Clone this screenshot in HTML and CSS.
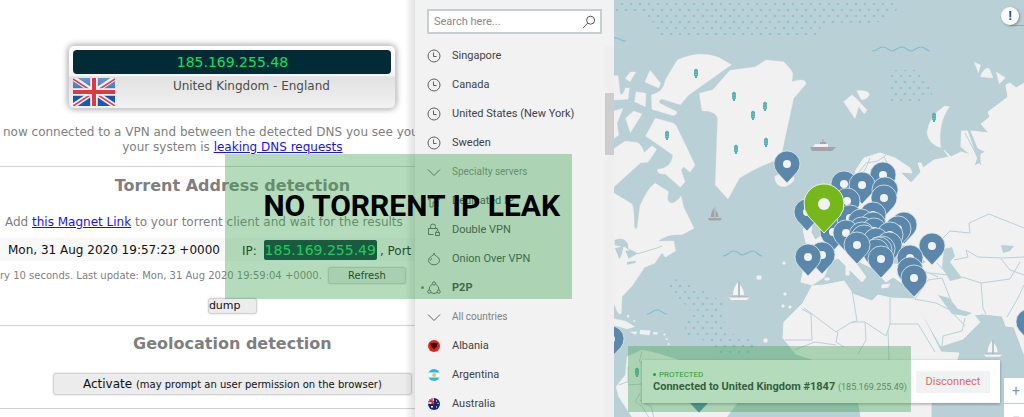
FILE: index.html
```html
<!DOCTYPE html>
<html lang="en">
<head>
    <meta charset="utf-8">
    <title>No torrent IP leak</title>
    <meta name="viewport" content="width=device-width, initial-scale=1">
    <link rel="stylesheet" href="styles.css">
</head>
<body>
<div class="page">

    <main class="report">
        <div class="reportInner">
            <div class="ipCard">
                <div class="ipBar">185.169.255.48</div>
                <div class="ipPlace">
                    <svg class="ukFlag" viewBox="0 0 42 28">
                        <defs>
                            <linearGradient id="flagBlue" x1="0" y1="0" x2="0" y2="1">
                                <stop offset="0" stop-color="#6f97cf"/>
                                <stop offset="0.5" stop-color="#3d6ebb"/>
                                <stop offset="0.51" stop-color="#1550a8"/>
                                <stop offset="1" stop-color="#1b59b4"/>
                            </linearGradient>
                        </defs>
                        <rect width="42" height="28" fill="url(#flagBlue)"/>
                        <path d="M0 0L42 28M42 0L0 28" stroke="#eef1f6" stroke-width="5"/>
                        <path d="M0 1L20 14M42 1L22 14M0 28L20 15M42 28L22 15" stroke="#e0444a" stroke-width="1.6"/>
                        <path d="M21 0V28M0 14H42" stroke="#f4f5f8" stroke-width="7.5"/>
                        <path d="M21 0V28M0 14H42" stroke="#dc3a3f" stroke-width="4"/>
                    </svg>
                    <span>United Kingdom - England</span>
                </div>
            </div>

            <p class="dnsNote">now connected to a VPN and between the detected DNS you see you</p>
            <p class="line">your system is <a href="#">leaking DNS requests</a></p>

            <section class="block torrent">
                <h2>Torrent Address detection</h2>
                <p class="magnet">Add <a href="#">this Magnet Link</a> to your torrent client and wait for the results</p>
                <div class="result">
                    <span>Mon, 31 Aug 2020 19:57:23 +0000</span>
                    <span class="resultPeer">IP: <span class="resultIp">185.169.255.49</span>, Port</span>
                </div>
                <div class="update">
                    <span>ry 10 seconds. Last update: Mon, 31 Aug 2020 19:59:04 +0000.</span>
                    <button class="refresh">Refresh</button>
                </div>
                <button class="dump">dump</button>
            </section>

            <section class="block geo">
                <h2>Geolocation detection</h2>
                <button class="activate">Activate <small>(may prompt an user permission on the browser)</small></button>
            </section>
            <hr>
        </div>
    </main>

    <aside class="servers">
        <label class="search">
            <input type="text" placeholder="Search here..." aria-label="Search">
            <svg class="searchIcon" viewBox="0 0 14 14"><circle cx="8.6" cy="5.2" r="4"/><path d="M5.6 8.2L1 13"/></svg>
        </label>
        <ul class="serverList">
            <li><a href="#"><svg class="icon"><use href="#clock"/></svg>Singapore</a></li>
            <li><a href="#"><svg class="icon"><use href="#clock"/></svg>Canada</a></li>
            <li><a href="#"><svg class="icon"><use href="#clock"/></svg>United States (New York)</a></li>
            <li><a href="#"><svg class="icon"><use href="#clock"/></svg>Sweden</a></li>
            <li><button class="group"><svg class="icon"><use href="#chevron"/></svg>Specialty servers</button></li>
            <li><a href="#"><svg class="icon" viewBox="0 0 14 14"><path d="M1 6L7 1L13 6M3 5V13H6V8H9V13H11V5"/></svg>Dedicated IP</a></li>
            <li><a href="#"><svg class="icon" viewBox="0 0 14 14"><path d="M6.500 11.500H1.500V5.500H10.500V7M3.500 5.500V3.500A2.500 2.500 0 0 1 8.500 3.500V5.500M8.500 9.500H12.500V12.500H8.500ZM9.500 9.500V8.500A1 1 0 0 1 11.500 8.500V9.500"/></svg>Double VPN</a></li>
            <li><a href="#"><svg class="icon" viewBox="0 0 14 14"><path d="M7 1Q7 3 9.500 4.300Q12.500 5.800 12.500 8.300C12.500 11 10 12.800 7 12.800S1.500 11 1.500 8.300Q1.500 5.800 4.500 4.300Q7 3 7 1ZM3.500 8.500Q3.700 7 5 6.300"/></svg>Onion Over VPN</a></li>
            <li class="active"><a href="#"><svg class="icon" viewBox="0 0 14 14"><circle cx="7" cy="2.500" r="1.600"/><circle cx="2.300" cy="10.700" r="1.600"/><circle cx="11.700" cy="10.700" r="1.600"/><path d="M5.300 3.200Q2 5 2 9M8.700 3.200Q12 5 12 9M3.900 11.600Q7 13.500 10.100 11.600"/></svg>P2P</a></li>
            <li><button class="group"><svg class="icon"><use href="#chevron"/></svg>All countries</button></li>
            <li><a href="#"><svg class="flag" viewBox="0 0 12 12"><circle cx="6" cy="6" r="6" fill="#e0261c"/><path d="M2.500 3L4.500 3.500L5 2.500L6 3.200L7 2.500L7.500 3.500L9.500 3L9 6.500L7.500 7.500L6 9.800L4.500 7.500L3 6.500Z" fill="#2d0a0a"/></svg>Albania</a></li>
            <li><a href="#"><svg class="flag" viewBox="0 0 12 12"><circle cx="6" cy="6" r="6" fill="#22b6f2"/><path d="M.6 3.500H11.400Q12.600 6 11.400 8.500H.6Q-.6 6 .6 3.500Z" fill="#fff"/><circle cx="6" cy="6" r="1.900" fill="#f3c537"/></svg>Argentina</a></li>
            <li><a href="#"><svg class="flag" viewBox="0 0 12 12"><circle cx="6" cy="6" r="6" fill="#1b2672"/><path d="M6 0V6H0A6 6 0 0 1 6 0Z" fill="#e9c3cb"/><path d="M4 .5V6M.5 3.500H6M1.500 1.500L6 6" stroke="#d5263b" stroke-width="1.200"/><path d="M3 8H5V9.500H3ZM8 2.500H9V3.500H8ZM9.500 5H10.500V6H9.500ZM8 8.500H9V9.500H8Z" fill="#fff"/></svg>Australia</a></li>
        </ul>
        <div class="scrollTrack"><div class="scrollThumb"></div></div>
    </aside>

    <section class="map">
        <svg class="world" viewBox="614 0 410 417" preserveAspectRatio="xMinYMin slice">
            <defs>
                <pattern id="dots" x="617" y="-2" width="9" height="12" patternUnits="userSpaceOnUse">
                    <circle cx="5" cy="6" r="1.300" fill="#8fc3ce"/>
                    <circle cx="0" cy="0" r="1.300" fill="#8fc3ce"/>
                    <circle cx="9" cy="0" r="1.300" fill="#8fc3ce"/>
                    <circle cx="0" cy="12" r="1.300" fill="#8fc3ce"/>
                    <circle cx="9" cy="12" r="1.300" fill="#8fc3ce"/>
                </pattern>
                <g id="pin">
                    <path d="M0 19L-9.800 8.500A13 13 0 1 1 9.800 8.500Z" fill="#5b88aa" stroke="#dfeaf0" stroke-width=".8"/>
                    <circle r="4" fill="#f1f3f4"/>
                </g>
                <g id="tree">
                    <path d="M0-4.500L2-3V2.500L1 3.500V5H-1V3.500L-2 2.500V-3Z" fill="#56b0b1"/>
                    <path d="M-2-1H2M-2 1.500H2" stroke="#a9d5d5" stroke-width=".4"/>
                </g>
                <g id="boat">
                    <path d="M-1-16V-3H-6Q-6-10-1-16ZM1-13Q5-9 5-3H1Z"/>
                    <path d="M-10-1H10L8 2H-8Z"/>
                    <path d="M0-17V-1M-9-1H9" stroke="#a5a2a5" stroke-width=".7"/>
                </g>
                <symbol id="clock" viewBox="0 0 14 14"><circle cx="7" cy="7" r="6"/><path d="M6.500 3.500V7.500H9.500"/></symbol>
                <symbol id="chevron" viewBox="0 0 14 14"><path d="M1 4.500L7 10.500L13 4.500"/></symbol>
            </defs>

            <path fill="url(#dots)" d="M614 0H898V9L880 22L855 24L820 28V35L800 38H760L700 36H655V24L640 12H614ZM888 70H916L932 84V96L914 103H888ZM670 280L682 279L705 292L723 302V320L735 336L756 337V357H715V342L685 338V326L690 308L670 293Z"/>

            <!-- arctic islands and greenland -->
            <g class="land" transform="translate(612 0) scale(.3333)">
                <path d="M196 180Q260 150 320 172L358 194L230 285L205 314L150 297Q138 300 143 310L195 335Q192 348 180 346L120 328L118 285L135 278Q155 270 160 240Z"/>
                <path d="M354 211L430 201L462 180L515 185Q540 210 542 220L540 245Q582 232 582 252L545 295L510 455Q505 478 480 485Q420 510 382 535L348 597L310 555L317 355Q312 338 290 334L270 332L262 280L302 270Z"/>
                <path d="M40 235L55 216L71 216L54 245ZM114 211L146 250L140 264L99 246ZM0 227H18L24 280Q32 292 40 264H52L48 298L0 300ZM72 275L102 280L100 320L68 305ZM0 335L33 325L15 370L20 405L0 420ZM65 333L90 342L55 398L41 355Z"/>
                <path d="M130 355L185 370Q193 376 197 386L249 495L234 517L215 500L207 510L219 545L205 562L160 522Q130 522 137 508Q178 505 183 465L101 408Z"/>
                <path d="M0 450L40 423L78 428Q92 440 96 458L120 437L134 448L108 487L86 488L0 566Z"/>
                <path d="M488 530Q515 510 546 530Q552 545 520 560Q490 562 488 530Z"/>
            </g>

            <!-- north america -->
            <g transform="translate(612 130) scale(.3333)">
                <path class="land" d="M0 185L60 222Q66 232 67 290Q72 304 76 290L84 228Q110 170 130 160L170 185Q160 215 180 220Q200 212 207 197L215 232L246 295L210 314Q165 310 138 334L185 333L191 362L160 382L150 368L128 400L98 412L60 468L30 500L28 550Q20 560 8 525H0Z"/>
                <path class="water" d="M8 330Q35 318 48 342L50 360L40 352L8 346ZM8 355L35 348L30 372L22 388L15 370ZM40 362L60 360L75 372L50 386ZM44 396L72 392L70 399L46 404Z"/>
                <path class="border thick" d="M50 358L78 371L138 353L150 348"/>
                <path class="land" d="M0 565L40 573L68 590L45 597L0 584ZM55 606L75 605L70 614ZM84 600L115 602L112 615L84 612ZM124 607H136V613H124ZM155 611H160V616H155ZM162 625H166V630H162ZM168 640H172V645H168ZM46 555H51V562H46ZM65 570H69V575H65Z"/>
                <path class="land" d="M45 680L90 660L130 668L200 690L260 740L375 820L345 861H60L20 800L12 770L40 735Z"/>
                <path class="border thick" d="M90 664L82 695L150 730M48 710V755L20 765M48 765L90 762M84 790L70 815L90 830L110 861M84 810L118 830L125 861"/>
            </g>

            <!-- eurasia -->
            <path class="land" d="M1030 80L1016 88L1010 83L1006 85L1008 97L988 112L990 117L981 124L989 133L971 131L978 148L986 152L981 154V163L974 166L977 157L971 155L961 152L951 157L944 150L949 157L934 160L923 168L921 163L918 163L921 172L911 183L900 172L912 173L910 168L895 158L880 153L864 158L856 170L850 195L836 226L815 240L822 258L805 263L801 282L812 285L824 277L830 262L838 258L852 272L862 282L866 277L852 258L872 268L886 282L893 277L905 285L914 288L915 300L917 305L941 346L963 339L980 322L974 315L983 314L1002 316L1006 326L1014 327L1018 338L1030 370Z"/>
            <path class="water" d="M944 249L952 247L955 256L950 262L962 278L950 281L942 267ZM891 250L904 245L926 262L915 267L892 263ZM1001 245L1014 246L1010 251L1003 253ZM938 295L949 298L958 309L972 313L966 316L952 314Z"/>
            <path class="border" d="M939 242L950 231L970 233L969 223L989 214L1024 228M954 260L968 257L966 250L978 257L1003 258L1024 257M962 277L981 283L983 308L986 314M981 283L1010 279L1020 262M1001 259L1010 270L1024 275M915 299L928 280L942 278L952 303M914 299L936 303L950 310L965 326M937 263L948 275L930 273M942 346L943 336L962 331L965 318M1007 317L1018 298L1024 285M905 285L922 270L938 277"/>
            <g class="land" transform="translate(816 0) scale(.3333)">
                <path d="M400 320Q365 370 374 443Q335 430 333 395Q340 350 385 318ZM83 305L108 284L125 300L153 330L145 342L128 320L117 356ZM122 272Q160 270 160 285Q150 302 135 298ZM475 187L494 195L487 218ZM493 230Q505 200 520 206L531 234ZM541 216L568 233L550 251ZM436 392H455L480 465L475 475L434 440Z"/>
            </g>
            <path class="border" d="M859 172L866 163L878 161L886 155M870 158L866 168L858 180M884 157L889 166L885 178M965 133L974 150L981 165"/>
            <path class="land" d="M803 229L812 226L811 232L818 246L806 243ZM846 264H849V275H846ZM882 285L890 284L888 287L882 288ZM825 278H829V280H825ZM783 262H785V264H783ZM784 293H786V295H784ZM782 305H784V307H782ZM789 306H791V308H789ZM764 339H767V342H764ZM757 276H761V279H757Z"/>

            <!-- africa -->
            <path class="land" d="M812 286L824 285L844 281L853 294L872 301L878 295L891 298L914 299L941 352L959 353L955 366L931 404V417H861L858 400L845 370L796 354L783 338L784 322L803 303Z"/>
            <path class="border" d="M804 308L836 332L850 323L857 321L852 290M802 309L811 314L812 340H785M890 298V324H918M890 324L886 336L865 322H852M865 322L866 340L858 354M838 332L836 342L844 347M888 330L889 360M918 324L926 337L935 352M794 350L815 342L836 345"/>

            <!-- waves -->
            <path fill="none" stroke="#7fbecb" stroke-width="1.200" d="M872 51C878 51 878 47 883 47S889 51 892 51S898 47 902 47S908 51 911 51S917 47 921 47S927 51 930 51M723 256C728 256 729 251 734 251S739 255 742 255S749 251 753 251S758 256 762 256M647 314C652 314 652 310 657 310S662 314 667 314M614 38C620 37 620 42 626 41"/>

            <use href="#tree" x="696" y="73"/>
            <use href="#tree" x="734" y="96"/>
            <use href="#tree" x="765" y="106"/>
            <use href="#tree" x="753" y="115"/>
            <use href="#tree" x="766" y="142"/>
            <use href="#tree" x="736" y="149"/>
            <use href="#tree" x="667" y="135"/>
            <use href="#tree" x="934" y="117"/>
            <use href="#tree" x="637" y="372"/>

            <path d="M810 147H836L832 151H812Z" fill="#a5a2a5"/>
            <path d="M815 144H828V147H813Z" fill="#f1f1f1"/>
            <path d="M820 142H826V144H820ZM822.500 139H823.500V142H822.500Z" fill="#a5a2a5"/>
            <path d="M1010 25.500H1024" stroke="#a5a2a5"/>
            <g fill="#a5a2a5" transform="translate(715 219) scale(.7)"><use href="#boat"/></g>
            <g fill="#f4f4f4" transform="translate(739 298)"><use href="#boat"/></g>
            <g fill="#f4f4f4" transform="translate(993 355) scale(.9)"><use href="#boat"/></g>

            <!-- server pins -->
            <use href="#pin" x="787" y="164"/>
            <use href="#pin" x="611" y="339"/>
            <use href="#pin" x="1029" y="322"/>
            <use href="#pin" x="699" y="394"/>
            <use href="#pin" x="844" y="184"/>
            <use href="#pin" x="883" y="175"/>
            <use href="#pin" x="862" y="185"/>
            <use href="#pin" x="885" y="190"/>
            <use href="#pin" x="884" y="198"/>
            <use href="#pin" x="847" y="201"/>
            <use href="#pin" x="807" y="212"/>
            <use href="#pin" x="833" y="232"/>
            <use href="#pin" x="850" y="218"/>
            <use href="#pin" x="873" y="215"/>
            <use href="#pin" x="861" y="222"/>
            <use href="#pin" x="873" y="225"/>
            <use href="#pin" x="904" y="225"/>
            <use href="#pin" x="898" y="229"/>
            <use href="#pin" x="862" y="230"/>
            <use href="#pin" x="874" y="231"/>
            <use href="#pin" x="846" y="233"/>
            <use href="#pin" x="890" y="235"/>
            <use href="#pin" x="862" y="235"/>
            <use href="#pin" x="864" y="238"/>
            <use href="#pin" x="876" y="241"/>
            <use href="#pin" x="889" y="245"/>
            <use href="#pin" x="822" y="255"/>
            <use href="#pin" x="882" y="249"/>
            <use href="#pin" x="879" y="250"/>
            <use href="#pin" x="876" y="252"/>
            <use href="#pin" x="857" y="245"/>
            <use href="#pin" x="808" y="257"/>
            <use href="#pin" x="881" y="259"/>
            <use href="#pin" x="932" y="246"/>
            <use href="#pin" x="910" y="258"/>
            <use href="#pin" x="910" y="270"/>
            <use href="#pin" x="914" y="278"/>
            <path d="M824 233L808 216A20 20 0 1 1 840 216Z" fill="#76b81b" stroke="#eaf3df"/>
            <circle cx="824" cy="204" r="6" fill="#f1f1f1"/>
        </svg>

        <button class="alert">!</button>
        <div class="zoom">
            <button>+</button>
            <button>−</button>
        </div>
        <div class="status">
            <div class="statusText">
                <span class="protected">PROTECTED</span>
                <span><b>Connected to United Kingdom #1847</b> <small>(185.169.255.49)</small></span>
            </div>
            <button class="disconnect">Disconnect</button>
        </div>
        <div class="statusMark"></div>
    </section>

    <div class="banner">NO TORRENT IP LEAK</div>
</div>
</body>
</html>
```
FILE: styles.css
```css
* {
    box-sizing: border-box;
}

body {
    margin: 0;
    font-family: "DejaVu Sans", Verdana, sans-serif;
    font-size: 12px;
    color: #7f7f7f;
    background-color: #fff;
}

p, h2, ul {
    margin: 0;
    padding: 0;
}

button, input {
    font-family: inherit;
    margin: 0;
}

.page {
    position: relative;
    display: grid;
    grid-template-columns: minmax(0, 415fr) minmax(0, 199fr) minmax(0, 410fr);
    height: 100vh;
    overflow: hidden;
}

/* === left: leak report === */

.report {
    position: relative;
    overflow: hidden;
}

.report::after {
    content: "";
    position: absolute;
    top: 0;
    right: 0;
    bottom: 0;
    width: 10px;
    background: linear-gradient(to right, rgba(0, 0, 0, 0), rgba(0, 0, 0, 0.12));
}

.reportInner {
    width: 112%;
    padding-top: 45px;
    text-align: center;
    white-space: nowrap;
}

.report a {
    color: #1a12f0;
}

.ipCard {
    width: 328px;
    height: 64px;
    margin: 0 auto;
    padding: 4px;
    border: 1px solid #d0d0d0;
    border-radius: 6px;
    background: linear-gradient(#fff, #f4f4f4 48%, #e2e2e2 50%, #f1f1f1);
    box-shadow: 0 0 6px rgba(0, 0, 0, 0.4);
}

.ipBar {
    height: 24px;
    line-height: 24px;
    border-radius: 4px;
    background-color: #032b36;
    color: #0ce05b;
    font-size: 14px;
}

.ipPlace {
    display: grid;
    grid-template-columns: 42px 1fr;
    padding-top: 4px;
    color: #4c4c4c;
}

.ipPlace span {
    padding-right: 4px;
    line-height: 16px;
}

.ukFlag {
    width: 42px;
    height: 28px;
}

.dnsNote {
    padding: 16px 0 0 3px;
    text-align: left;
    line-height: 15px;
}

.line {
    line-height: 15px;
}

.block {
    border-top: 1px solid #d2d2d2;
}

.block h2 {
    font-size: 16px;
    line-height: 20px;
}

.torrent {
    margin-top: 11px;
    padding: 9px 0 11px;
}

.magnet {
    padding: 18px 0 8px 5px;
    text-align: left;
    line-height: 16px;
}

.result {
    display: flex;
    align-items: center;
    gap: 22px;
    height: 23px;
    padding-left: 8px;
    background-color: #f8f8f8;
    color: #111;
}

.resultIp {
    display: inline-block;
    margin: 0 3px;
    padding: 0 1px;
    line-height: 20px;
    border-radius: 2px;
    background-color: #032b36;
    color: #0ce05b;
    font-size: 14px;
}

.update {
    display: flex;
    align-items: center;
    gap: 6px;
    padding: 6px 0 14px;
    font-size: 10px;
}

.report button {
    border: 1px solid #d2d2d2;
    border-radius: 3px;
    background-color: #ececec;
    box-shadow: 0 0 2px rgba(0, 0, 0, 0.2);
    color: #111;
}

.report .refresh {
    width: 78px;
    height: 17px;
    padding: 0;
    font-size: 10px;
    line-height: 15px;
}

.report .dump {
    display: block;
    width: 49px;
    height: 16px;
    margin: 0 auto;
    padding: 0;
    font-size: 11px;
    line-height: 14px;
    text-align: left;
}

.geo {
    padding: 8px 0 13px;
}

.activate {
    width: 359px;
    height: 22px;
    margin-top: 19px;
    padding: 0;
    font-size: 12px;
}

.activate small {
    font-size: 10px;
}

.report hr {
    margin: 0;
    border: 0;
    border-top: 1px solid #d2d2d2;
}

/* === middle: server list === */

.servers {
    position: relative;
    padding: 9px 12px 0;
    background-color: #f2f2f2;
    color: #3e4347;
    font-family: Roboto, "Open Sans", sans-serif;
    font-size: 11px;
    overflow: hidden;
}

.search {
    display: flex;
    align-items: center;
    height: 25px;
    padding-right: 4px;
    border: 2px solid #c8cdd0;
    background-color: #fff;
}

.search input {
    flex: 1;
    min-width: 0;
    padding: 0 0 0 5px;
    border: 0;
    background: none;
    font-size: 11px;
}

.search input::placeholder {
    color: #888;
}

.searchIcon {
    width: 14px;
    height: 14px;
    fill: none;
    stroke: #555;
}

.serverList {
    margin-top: 7px;
    list-style: none;
    white-space: nowrap;
}

.serverList li {
    position: relative;
}

.serverList a,
.serverList .group {
    display: flex;
    align-items: center;
    gap: 11px;
    width: 100%;
    height: 29px;
    padding: 0;
    color: inherit;
    text-decoration: none;
}

.serverList .group {
    border: 0;
    background: none;
    color: #7e8183;
    font-size: 10px;
}

.icon {
    width: 14px;
    height: 14px;
    fill: none;
    stroke: #5c6165;
}

.flag {
    width: 12px;
    height: 12px;
    margin: 0 1px;
}

.active {
    font-weight: bold;
}

.active::before {
    content: "";
    position: absolute;
    top: 13px;
    left: -6px;
    width: 3px;
    height: 3px;
    border-radius: 50%;
    background-color: #2da52d;
}

.scrollTrack {
    position: absolute;
    top: 46px;
    right: 0;
    bottom: 0;
    width: 9px;
    padding-top: 47px;
    background-color: #efefef;
}

.scrollThumb {
    height: 62px;
    background-color: #cdcdcd;
}

/* === right: map === */

.map {
    position: relative;
    overflow: hidden;
    background-color: #bad0d7;
    font-family: Roboto, "Open Sans", sans-serif;
}

.world {
    display: block;
    width: 100%;
    height: 100%;
}

.land {
    fill: #f1f1f1;
    stroke: #f1f1f1;
    stroke-linejoin: round;
}

.water {
    fill: #bad0d7;
}

.border {
    fill: none;
    stroke: #bad0d7;
    stroke-linejoin: round;
}

.thick {
    stroke-width: 3px;
}

.alert {
    position: absolute;
    top: 7px;
    right: 5px;
    width: 18px;
    height: 18px;
    padding: 0;
    border: 0;
    border-radius: 50%;
    background-color: #fff;
    box-shadow: 1px 1px 3px rgba(0, 0, 0, 0.3);
    color: #1f4a73;
    font-size: 12px;
    font-weight: bold;
    line-height: 18px;
}

.zoom {
    position: absolute;
    top: 378px;
    right: -4px;
    display: grid;
    gap: 1px;
}

.zoom button {
    width: 24px;
    height: 25px;
    padding: 0;
    border: 0;
    background-color: #fff;
    color: #7fa0ab;
    font-size: 14px;
}

.status {
    position: absolute;
    right: 24px;
    bottom: 14px;
    left: 28px;
    display: flex;
    align-items: center;
    justify-content: space-between;
    height: 43px;
    padding: 0 10px 0 11px;
    background-color: #fff;
    box-shadow: 0 1px 3px rgba(0, 0, 0, 0.35);
    color: #333;
    white-space: nowrap;
}

.statusText {
    display: grid;
    line-height: 13px;
    font-size: 11px;
}

.statusText small {
    color: #777;
    font-size: 9px;
}

.protected {
    color: #139a17;
    font-size: 8px;
    line-height: 11px;
}

.protected::before {
    content: "";
    display: inline-block;
    width: 3px;
    height: 3px;
    margin-right: 3px;
    border-radius: 50%;
    background-color: #139a17;
    vertical-align: middle;
}

.disconnect {
    width: 74px;
    height: 22px;
    padding: 0;
    border: 0;
    background-color: #f1f2f3;
    color: #e06a62;
    font-size: 11px;
}

/* green highlights over the panels */

.statusMark {
    position: absolute;
    bottom: 5px;
    left: 14px;
    width: 283px;
    height: 66px;
    background-color: rgba(63, 165, 83, 0.39);
}

.banner {
    position: absolute;
    top: 154px;
    left: 22%;
    width: 347px;
    height: 145px;
    padding: 33px 0 0 26px;
    background-color: rgba(63, 165, 83, 0.39);
    color: #000;
    font-family: Roboto, sans-serif;
    font-size: 30px;
    font-weight: bold;
    line-height: 38px;
    text-align: center;
    white-space: nowrap;
}
```
